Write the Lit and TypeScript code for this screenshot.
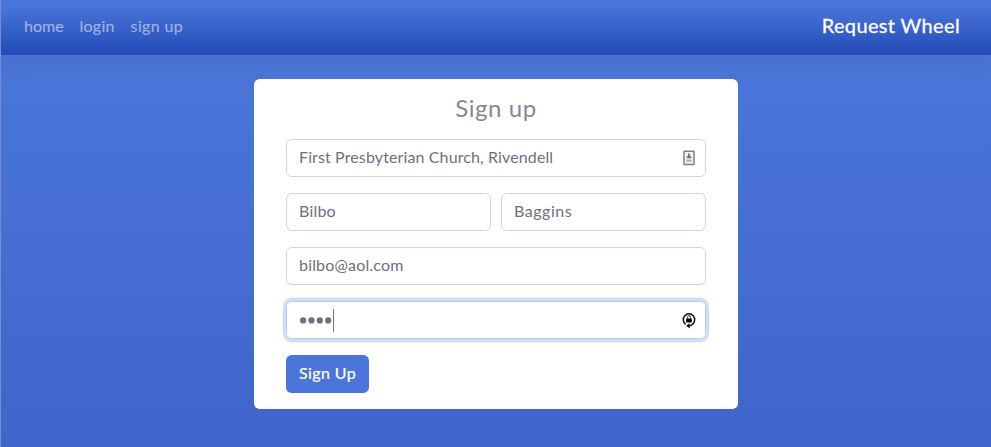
import { LitElement, html, css, svg } from "lit";
import { customElement } from "lit/decorators.js";

const contactIcon = svg`<svg class="icon" viewBox="0 0 16 16" width="16" height="16">
  <rect x="3" y="1.2" width="10" height="13.3" rx=".3" fill="#f1f1f1" stroke="#808080" stroke-width="1.5"/>
  <path d="M7.2 3.6h1.6v2l1.4 1.2v1.5H5.8V6.8l1.4-1.2Z" fill="#707070"/>
  <rect x="5.4" y="9.6" width="5.2" height="2" fill="#aaa"/>
</svg>`;

const lockIcon = svg`<svg class="icon" viewBox="0 0 16 16" width="16" height="16">
  <path d="M4.6 12.4A5.7 5.9 0 1 1 11.4 12.4" fill="none" stroke="#111" stroke-width="1.5"/>
  <path d="M11.7 12.2Q10.4 13.7 8.2 13.8" fill="none" stroke="#111" stroke-width="1.5"/>
  <path d="M8.6 11.2V16.4L5.2 13.8Z" fill="#000"/>
  <rect x="5.2" y="6.6" width="5.6" height="3.8" rx=".4" fill="#000"/>
  <path d="M6.4 6.8V5.3a1.6 1.6 0 0 1 3.2 0V6.8" fill="none" stroke="#333" stroke-width="1"/>
</svg>`;

const passwordDots = svg`<svg class="dots" viewBox="0 0 33 8" width="33" height="8">
  ${[0, 1, 2, 3].map((i) => svg`<circle cx=${4.1 + i * 8.35} cy="4.4" r="3.1" fill="#6e707e"/>`)}
</svg>`;

@customElement("app-root")
export class AppRoot extends LitElement {
  static styles = css`
    :host {
      display: flex;
      flex-direction: column;
      box-sizing: border-box;
      height: 447px;
      border-left: 1px solid #6f8fdb;
      background: linear-gradient(180deg, #4b75d9 0, #4b75d9 70px, #4065cb 447px);
      font: 16px/24px Lato, "Open Sans", sans-serif;
      color: #6e707e;
      overflow: hidden;
    }
    * { box-sizing: border-box; }
    .bar {
      height: 55px;
      flex: none;
      display: flex;
      align-items: center;
      justify-content: space-between;
      padding: 0 31px 3px 23px;
      background: linear-gradient(180deg, #4b75d9 10%, #224bb8 100%);
      box-shadow: 0 2px 28px rgba(58, 59, 69, .15);
    }
    .links { display: flex; gap: 16px; }
    .link { color: rgba(255, 255, 255, .5); -webkit-text-stroke: .2px rgba(255, 255, 255, .3); }
    .link:nth-child(2) { letter-spacing: .22px; }
    .link:nth-child(3) { letter-spacing: .36px; }
    .brand {
      color: #fff;
      font-size: 20px;
      letter-spacing: .36px;
      padding-bottom: 2px;
      -webkit-text-stroke: .3px #fff;
    }
    .card {
      width: 484px;
      height: 330px;
      margin: 24px 0 0 253px;
      padding: 16px 32px;
      background: #fff;
      border-radius: 5.6px;
      display: flex;
      flex-direction: column;
      gap: 16px;
    }
    .title {
      height: 28px;
      margin: 0;
      font-size: 24px;
      line-height: 26px;
      font-weight: 400;
      letter-spacing: .55px;
      color: #858796;
      text-align: center;
    }
    .row { display: flex; gap: 10px; }
    .field {
      flex: 1;
      height: 38px;
      display: flex;
      align-items: center;
      padding: 0 8px 0 12px;
      border: 1px solid #d1d3e2;
      border-radius: 5.6px;
    }
    .value { padding-bottom: 2px; }
    .church { letter-spacing: .12px; }
    .first { letter-spacing: .2px; }
    .last { letter-spacing: .55px; }
    .email { letter-spacing: .17px; }
    .focus { border-color: #bac8f3; box-shadow: 0 0 0 3.2px #d2dcf6; }
    .icon { margin-left: auto; overflow: visible; }
    .caret { width: 1px; height: 23px; margin-left: 1px; background: #6e707e; }
    .button {
      width: 83px;
      height: 38px;
      padding: 0 0 2px;
      border: 0;
      border-radius: 5.6px;
      background: #4b75d9;
      color: #fff;
      font: inherit;
      letter-spacing: .4px;
      -webkit-text-stroke: .2px #fff;
    }
  `;

  render() {
    return html`
      <nav class="bar">
        <div class="links"><span class="link">home</span><span class="link">login</span><span class="link">sign up</span></div>
        <span class="brand">Request Wheel</span>
      </nav>
      <main class="card">
        <h1 class="title">Sign up</h1>
        <div class="row"><div class="field"><span class="value church">First Presbyterian Church, Rivendell</span>${contactIcon}</div></div>
        <div class="row">
          <div class="field"><span class="value first">Bilbo</span></div>
          <div class="field"><span class="value last">Baggins</span></div>
        </div>
        <div class="row"><div class="field"><span class="value email">bilbo@aol.com</span></div></div>
        <div class="row">
          <div class="field focus">${passwordDots}<i class="caret"></i>${lockIcon}</div>
        </div>
        <button class="button">Sign Up</button>
      </main>
    `;
  }
}
